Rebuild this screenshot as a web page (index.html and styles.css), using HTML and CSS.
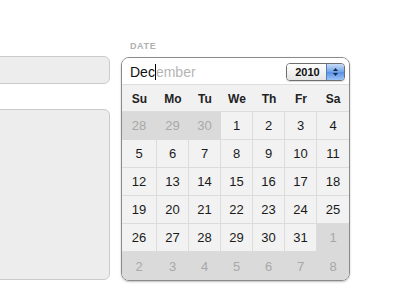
FILE: index.html
```html
<!DOCTYPE html>
<html lang="en">

<head>
    <meta charset="UTF-8">
    <title>Date Picker</title>
    <link rel="stylesheet" href="styles.css">
</head>

<body>
    <div class="page">
        <div class="left-col">
            <div class="field"></div>
            <div class="textarea"></div>
        </div>

        <div class="date-col">
            <div class="label">DATE</div>
            <div class="calendar">
                <div class="cal-head">
                    <div class="month"><span class="typed">Dec</span><span class="caret"></span><span class="rest">ember</span></div>
                    <div class="year-select">
                        <span class="year">2010</span>
                        <span class="arrows">
                            <svg width="7" height="10" viewBox="0 0 7 10">
                                <path d="M3.5 1 L6 4 L1 4 Z" fill="#1b2a44" />
                                <path d="M3.5 9 L6 6 L1 6 Z" fill="#1b2a44" />
                            </svg>
                        </span>
                    </div>
                </div>
                <div class="weekdays">
                    <div>Su</div>
                    <div>Mo</div>
                    <div>Tu</div>
                    <div>We</div>
                    <div>Th</div>
                    <div>Fr</div>
                    <div>Sa</div>
                </div>
                <div class="days" id="days"></div>
            </div>
        </div>
    </div>

    <script>
        // December 2010 starts on a Wednesday
        const days = document.getElementById("days");
        const cells = [];
        [28, 29, 30].forEach(d => cells.push({ d, out: true }));
        for (let d = 1; d <= 31; d++) cells.push({ d, out: false });
        let next = 1;
        while (cells.length < 42) cells.push({ d: next++, out: true });

        cells.forEach((c, i) => {
            const cell = document.createElement("div");
            cell.className = "day" + (c.out ? " out" : "");
            if (i % 7 === 6) cell.classList.add("last-col");
            if (i >= 35) cell.classList.add("last-row");
            cell.textContent = c.d;
            days.appendChild(cell);
        });
    </script>
</body>

</html>
```

FILE: styles.css
```css
body {
    margin: 0;
    font-family: "Liberation Sans", Arial, sans-serif;
    background-color: #fff;
    width: 400px;
    height: 300px;
    overflow: hidden;
}

.page {
    display: flex;
    gap: 11px;
    padding-top: 41px;
    margin-left: -20px;
}

.left-col {
    width: 130px;
    padding-top: 15px;
    display: flex;
    flex-direction: column;
    gap: 25px;
}

.field,
.textarea {
    background-color: #ededed;
    border: 1px solid #cbcbcb;
    border-radius: 6px;
}

.field {
    height: 26px;
}

.textarea {
    height: 169px;
}

.label {
    font-size: 9px;
    font-weight: bold;
    color: #b0b0b0;
    letter-spacing: 0.6px;
    line-height: 11px;
    padding-left: 9px;
    margin-bottom: 5px;
}

.calendar {
    width: 227px;
    border: 1px solid #8a8a8a;
    border-radius: 8px;
    overflow: hidden;
    box-shadow: 0 1px 2px rgba(0, 0, 0, 0.25);
}

.cal-head {
    height: 26px;
    background-color: #fff;
    display: flex;
    align-items: center;
    justify-content: space-between;
    padding: 0 4px 0 8px;
}

.month {
    font-size: 14px;
    display: flex;
    align-items: center;
    margin-top: 1px;
}

.typed {
    color: #111;
}

.caret {
    width: 1px;
    height: 16px;
    background-color: #000;
}

.rest {
    color: #b5b5b5;
}

.year-select {
    display: flex;
    height: 16px;
    width: 57px;
    border: 1px solid #6f6f6f;
    border-radius: 4px;
    overflow: hidden;
    margin-top: 1px;
    box-shadow: 0 1px 1px rgba(0, 0, 0, 0.15);
}

.year {
    flex: 1;
    font-size: 11px;
    font-weight: bold;
    color: #111;
    text-align: center;
    line-height: 16px;
    background: linear-gradient(#ffffff, #e4e4e4);
    padding-left: 2px;
}

.arrows {
    width: 17px;
    display: flex;
    align-items: center;
    justify-content: center;
    background: linear-gradient(#c9dcf6, #6ea3ea 50%, #5790e6 51%, #9cc2f4);
    border-left: 1px solid #5a7bb0;
}

.weekdays {
    display: grid;
    grid-template-columns: 35px repeat(6, 32px);
    height: 26px;
    background-color: #f1f1f1;
    border-top: 1px solid #dedede;
    border-bottom: 1px solid #dcdcdc;
    font-size: 12px;
    font-weight: bold;
    color: #222;
}

.weekdays div {
    display: flex;
    align-items: center;
    justify-content: center;
    padding-top: 1px;
}

.days {
    display: grid;
    grid-template-columns: 35px repeat(6, 32px);
    grid-template-rows: repeat(6, 28px);
}

.day {
    display: flex;
    align-items: center;
    justify-content: center;
    background-color: #f2f2f2;
    border-right: 1px solid #dcdcdc;
    border-bottom: 1px solid #dcdcdc;
    font-size: 13px;
    color: #1a1a1a;
}

.day.last-col {
    border-right: none;
}

.day.last-row {
    border-bottom: none;
}

.day.out {
    background-color: #dadada;
    border-color: #dadada;
    color: #a8a8a8;
}
```
